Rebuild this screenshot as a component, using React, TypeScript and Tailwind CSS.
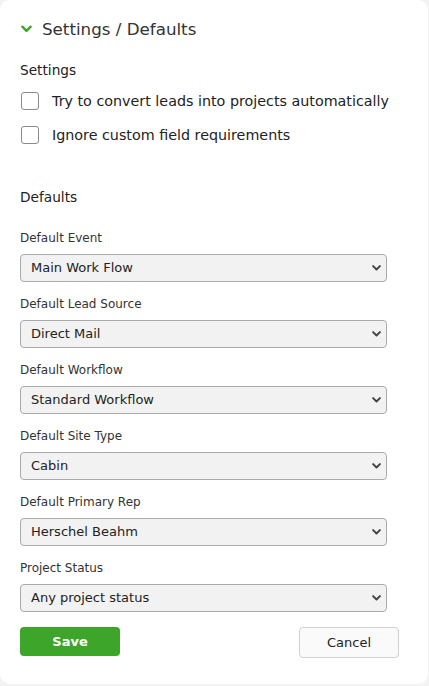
import React from 'react';

const fields = [
  { label: 'Default Event', value: 'Main Work Flow' },
  { label: 'Default Lead Source', value: 'Direct Mail' },
  { label: 'Default Workflow', value: 'Standard Workflow' },
  { label: 'Default Site Type', value: 'Cabin' },
  { label: 'Default Primary Rep', value: 'Herschel Beahm' },
  { label: 'Project Status', value: 'Any project status' },
];

const settings = [
  'Try to convert leads into projects automatically',
  'Ignore custom field requirements',
];

const Chevron = ({ className = '' }: { className?: string }) => (
  <svg viewBox="0 0 12 8" className={className} fill="none" stroke="currentColor" strokeWidth="2.6" strokeLinecap="round" strokeLinejoin="round">
    <path d="M1.5 1.5 6 6l4.5-4.5" />
  </svg>
);

const SelectField = ({ label, value }: { label: string; value: string }) => (
  <div className="flex flex-col">
    <label className="text-[12px] leading-4 text-[#333] mb-[8px]">{label}</label>
    <div className="relative w-[367px]">
      <select
        defaultValue={value}
        className="w-full h-[28px] appearance-none rounded-[4px] border border-[#a9a9a9] bg-[#f2f2f2] pl-[10px] pr-8 text-[13px] text-[#222] outline-none"
      >
        <option>{value}</option>
      </select>
      <Chevron className="pointer-events-none absolute right-[6px] top-1/2 -translate-y-1/2 w-[9px] h-[6px] text-[#444]" />
    </div>
  </div>
);

export default function App() {
  return (
    <div className="min-h-[686px] bg-[#f3f3f3]" style={{ fontFamily: '"DejaVu Sans", Verdana, sans-serif' }}>
      <div className="w-[428px] h-[684px] bg-white rounded-[10px] pl-5 pt-[18px]">
        {/* Header */}
        <div className="flex items-center gap-[10px]">
          <Chevron className="w-[11px] h-[8px] text-[#3ca52a] ml-[1px]" />
          <h2 className="text-[16.7px] leading-[22px] text-[#333]">Settings / Defaults</h2>
        </div>

        {/* Settings */}
        <div className="mt-[21px] text-[13.7px] leading-[18px] text-[#222]">Settings</div>
        <div className="mt-[13px] flex flex-col gap-[16px]">
          {settings.map((s) => (
            <label key={s} className="flex items-center gap-[13px]">
              <span className="ml-[1px] w-[18px] h-[18px] rounded-[3px] border border-[#8a8a8a] bg-white shrink-0" />
              <span className="text-[14.3px] leading-[18px] text-[#222]">{s}</span>
            </label>
          ))}
        </div>

        {/* Defaults */}
        <div className="mt-[44px] text-[13.7px] leading-[18px] text-[#222]">Defaults</div>
        <div className="mt-[24px] flex flex-col gap-[14px]">
          {fields.map((f) => (
            <SelectField key={f.label} label={f.label} value={f.value} />
          ))}
        </div>

        {/* Actions */}
        <div className="mt-[15px] flex items-start justify-between w-[379px]">
          <button className="w-[100px] h-[29px] rounded-[4px] bg-[#3ca52a] text-white text-[13px] font-bold">Save</button>
          <button className="w-[100px] h-[31px] rounded-[4px] border border-[#d0d0d0] bg-[#fafafa] text-[#222] text-[13px]">Cancel</button>
        </div>
      </div>
    </div>
  );
}
